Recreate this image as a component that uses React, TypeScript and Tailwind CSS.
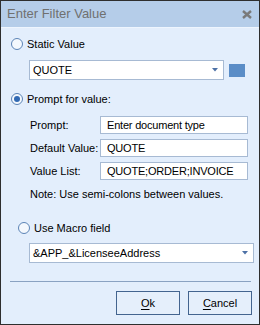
import { ReactNode } from 'react';

function Radio({ checked, label }: { checked?: boolean; label: string }) {
  return (
    <div className="flex h-[14px] items-center gap-[4px]">
      <span className="flex h-[12px] w-[12px] items-center justify-center rounded-full border border-[#5c84b6] bg-[#f4f8fd]">
        {checked && <span className="h-[6px] w-[6px] rounded-full bg-[#3169b3]" />}
      </span>
      <span>{label}</span>
    </div>
  );
}

function Arrow() {
  return (
    <svg width="6" height="4" viewBox="0 0 6 4" className="shrink-0">
      <path d="M0 0h6L3 3.5z" fill="#4d71a6" />
    </svg>
  );
}

function Combo({ value, width }: { value: string; width: string }) {
  return (
    <div className={`flex h-[20px] items-center justify-between border border-[#a7bad3] bg-white pl-[3px] pr-[5px] ${width}`}>
      <span>{value}</span>
      <Arrow />
    </div>
  );
}

function Field({ label, children }: { label: string; children: ReactNode }) {
  return (
    <div className="flex h-[18px] items-center">
      <span className="w-[70px]">{label}</span>
      <div className="flex h-[18px] w-[148px] items-center border border-[#a7bad3] bg-white pl-[6px] tracking-[-0.2px]">
        {children}
      </div>
    </div>
  );
}

function Button({ hot, rest }: { hot: string; rest: string }) {
  return (
    <button
      type="button"
      className="flex h-[24px] w-[64px] items-center justify-center border border-[#43648f] bg-[#e5effb]"
    >
      <span className="underline underline-offset-2">{hot}</span>
      {rest}
    </button>
  );
}

export default function App() {
  return (
    <div className="flex h-[325px] w-[260px] flex-col border border-[#2e2e2e] bg-[#e3eefc] font-['Liberation_Sans',Arial,sans-serif] text-[11px] leading-[14px] text-black">
      <div className="flex h-[26px] shrink-0 items-center justify-between bg-[#b5cde9] pl-[6px] pr-[7px]">
        <span className="text-[13px] text-[#707070]">Enter Filter Value</span>
        <svg width="10" height="9" viewBox="0 0 10 9">
          <path d="M1 1l8 7M9 1L1 8" stroke="#7a7a7a" strokeWidth="2.4" />
        </svg>
      </div>

      <div className="flex flex-col border-t border-[#eef5fe]">
        <div className="ml-[10px] mt-[9px]">
          <Radio label="Static Value" />
        </div>
        <div className="ml-[28px] mt-[9px] flex items-center gap-[5px]">
          <Combo value="QUOTE" width="w-[195px]" />
          <span className="h-[13px] w-[16px] bg-[#5b8dc7]" />
        </div>

        <div className="ml-[10px] mt-[12px]">
          <Radio checked label="Prompt for value:" />
        </div>
        <div className="ml-[29px] mt-[10px] flex flex-col gap-[5px]">
          <Field label="Prompt:">Enter document type</Field>
          <Field label="Default Value:">QUOTE</Field>
          <Field label="Value List:">QUOTE;ORDER;INVOICE</Field>
        </div>
        <div className="ml-[29px] mt-[7px]">Note: Use semi-colons between values.</div>

        <div className="ml-[17px] mt-[20px]">
          <Radio label="Use Macro field" />
        </div>
        <div className="ml-[28px] mt-[8px]">
          <Combo value="&APP_&LicenseeAddress" width="w-[225px]" />
        </div>

        <div className="ml-[9px] mt-[18px] h-px w-[241px] bg-[#8aa2c2]" />

        <div className="mt-[9px] flex justify-end gap-[8px] pr-[7px]">
          <Button hot="O" rest="k" />
          <Button hot="C" rest="ancel" />
        </div>
      </div>
    </div>
  );
}
